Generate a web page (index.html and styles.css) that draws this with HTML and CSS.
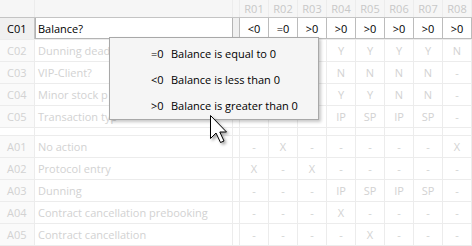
FILE: index.html
```html
<!DOCTYPE html>
<html>
<head>
<meta charset="utf-8">
<link rel="stylesheet" href="styles.css">
</head>
<body>
<div class="table">
  <div class="row head">
    <div class="lbl"></div><div class="txt"></div><div class="gap"></div>
    <div class="v">R01</div><div class="v">R02</div><div class="v">R03</div><div class="v">R04</div><div class="v">R05</div><div class="v">R06</div><div class="v">R07</div><div class="v last">R08</div>
  </div>
  <div class="row active">
    <div class="lbl">C01</div><div class="txt">Balance?</div><div class="gap"></div>
    <div class="v">&lt;0</div><div class="v">=0</div><div class="v">&gt;0</div><div class="v">&gt;0</div><div class="v">&gt;0</div><div class="v">&gt;0</div><div class="v">&gt;0</div><div class="v last">&gt;0</div>
  </div>
  <div class="row">
    <div class="lbl">C02</div><div class="txt">Dunning dead</div><div class="gap"></div>
    <div class="v"></div><div class="v"></div><div class="v"></div><div class="v">Y</div><div class="v">Y</div><div class="v">Y</div><div class="v">Y</div><div class="v last">N</div>
  </div>
  <div class="row">
    <div class="lbl">C03</div><div class="txt">VIP-Client?</div><div class="gap"></div>
    <div class="v"></div><div class="v"></div><div class="v"></div><div class="v">N</div><div class="v">N</div><div class="v">N</div><div class="v">N</div><div class="v last">-</div>
  </div>
  <div class="row">
    <div class="lbl">C04</div><div class="txt">Minor stock p</div><div class="gap"></div>
    <div class="v"></div><div class="v"></div><div class="v"></div><div class="v">Y</div><div class="v">Y</div><div class="v">N</div><div class="v">N</div><div class="v last">-</div>
  </div>
  <div class="row">
    <div class="lbl">C05</div><div class="txt">Transaction typ</div><div class="gap"></div>
    <div class="v"></div><div class="v"></div><div class="v"></div><div class="v">IP</div><div class="v">SP</div><div class="v">IP</div><div class="v">SP</div><div class="v last">-</div>
  </div>
  <div class="row sep">
    <div class="lbl"></div><div class="txt"></div><div class="gap"></div>
    <div class="v"></div><div class="v"></div><div class="v"></div><div class="v"></div><div class="v"></div><div class="v"></div><div class="v"></div><div class="v last"></div>
  </div>
  <div class="row">
    <div class="lbl">A01</div><div class="txt">No action</div><div class="gap"></div>
    <div class="v">-</div><div class="v">X</div><div class="v">-</div><div class="v">-</div><div class="v">-</div><div class="v">-</div><div class="v">-</div><div class="v last">X</div>
  </div>
  <div class="row">
    <div class="lbl">A02</div><div class="txt">Protocol entry</div><div class="gap"></div>
    <div class="v">X</div><div class="v">-</div><div class="v">X</div><div class="v">-</div><div class="v">-</div><div class="v">-</div><div class="v">-</div><div class="v last">-</div>
  </div>
  <div class="row">
    <div class="lbl">A03</div><div class="txt">Dunning</div><div class="gap"></div>
    <div class="v">-</div><div class="v">-</div><div class="v">-</div><div class="v">IP</div><div class="v">SP</div><div class="v">IP</div><div class="v">SP</div><div class="v last">-</div>
  </div>
  <div class="row">
    <div class="lbl">A04</div><div class="txt">Contract cancellation prebooking</div><div class="gap"></div>
    <div class="v">-</div><div class="v">-</div><div class="v">-</div><div class="v">X</div><div class="v">-</div><div class="v">-</div><div class="v">-</div><div class="v last">-</div>
  </div>
  <div class="row final">
    <div class="lbl">A05</div><div class="txt">Contract cancellation</div><div class="gap"></div>
    <div class="v">-</div><div class="v">-</div><div class="v">-</div><div class="v">-</div><div class="v">X</div><div class="v">-</div><div class="v">-</div><div class="v last">-</div>
  </div>

  <div class="menu">
    <div class="item"><span class="sym">=0</span><span>Balance is equal to 0</span></div>
    <div class="item"><span class="sym">&lt;0</span><span>Balance is less than 0</span></div>
    <div class="item"><span class="sym">&gt;0</span><span>Balance is greater than 0</span></div>
  </div>

  <svg class="cursor" width="24" height="32" viewBox="0 0 24 32">
    <polygon points="0.5,0.5 0.5,23.5 6,18 10.5,27.5 14,26 9.8,17 16.5,17" fill="#fff" stroke="#000" stroke-width="1" stroke-linejoin="miter"/>
  </svg>
</div>
</body>
</html>
```

FILE: styles.css
```css
html, body {
  margin: 0;
  padding: 0;
  background: #fff;
}
body {
  font-family: "Open Sans", "Noto Sans", sans-serif;
  font-size: 11px;
}
.table {
  position: relative;
  width: 472px;
  height: 246px;
  overflow: hidden;
}
.row {
  display: grid;
  grid-template-columns: 35px 198px 6px repeat(7, 29px) 30px;
  height: 22px;
  box-sizing: border-box;
  border-top: 1px solid #ececec;
  color: #d2d2d2;
  line-height: 21px;
}
.row > div {
  box-sizing: border-box;
  white-space: nowrap;
  overflow: hidden;
}
.lbl {
  border-right: 1px solid #ececec;
  padding-left: 7px;
  background: #fafafa;
}
.txt {
  border-right: 1px solid #ececec;
  padding-left: 3px;
}
.v {
  border-left: 1px solid #ececec;
  text-align: center;
}
.v.last {
  border-right: 1px solid #ececec;
}
.head {
  height: 17px;
  border-top: none;
  background: #f6f6f6;
  line-height: 17px;
  color: #c8c8c8;
}
.head .lbl { background: #f6f6f6; }
.sep {
  height: 8px;
}
.sep .lbl { background: #fff; }
.final {
  height: 23px;
  border-bottom: 1px solid #ececec;
}
.active {
  color: #000;
  border-top-color: #c4c4c4;
  background: #f0f0f0;
}
.active .lbl {
  background: #f0f0f0;
  border-right-color: #c4c4c4;
}
.active .txt {
  background: #fff;
  border: 1px solid #b4b4b4;
  border-top: none;
  padding-left: 2px;
}
.active .v {
  background: #fff;
  border-left-color: #bcbcbc;
  border-bottom: 1px solid #bcbcbc;
}
.active .v.last {
  border-right-color: #bcbcbc;
}
.menu {
  position: absolute;
  left: 109px;
  top: 37px;
  width: 210px;
  height: 83px;
  box-sizing: border-box;
  padding: 2px 0 0 41px;
  background: #f5f5f5;
  border: 1px solid #a8a8a8;
  box-shadow: 2px 2px 3px rgba(0, 0, 0, 0.22);
  color: #000;
}
.item {
  display: flex;
  height: 26px;
  align-items: center;
}
.sym {
  width: 20px;
}
.cursor {
  position: absolute;
  left: 210px;
  top: 115px;
  filter: drop-shadow(2px 2px 1.5px rgba(0, 0, 0, 0.35));
}
```
